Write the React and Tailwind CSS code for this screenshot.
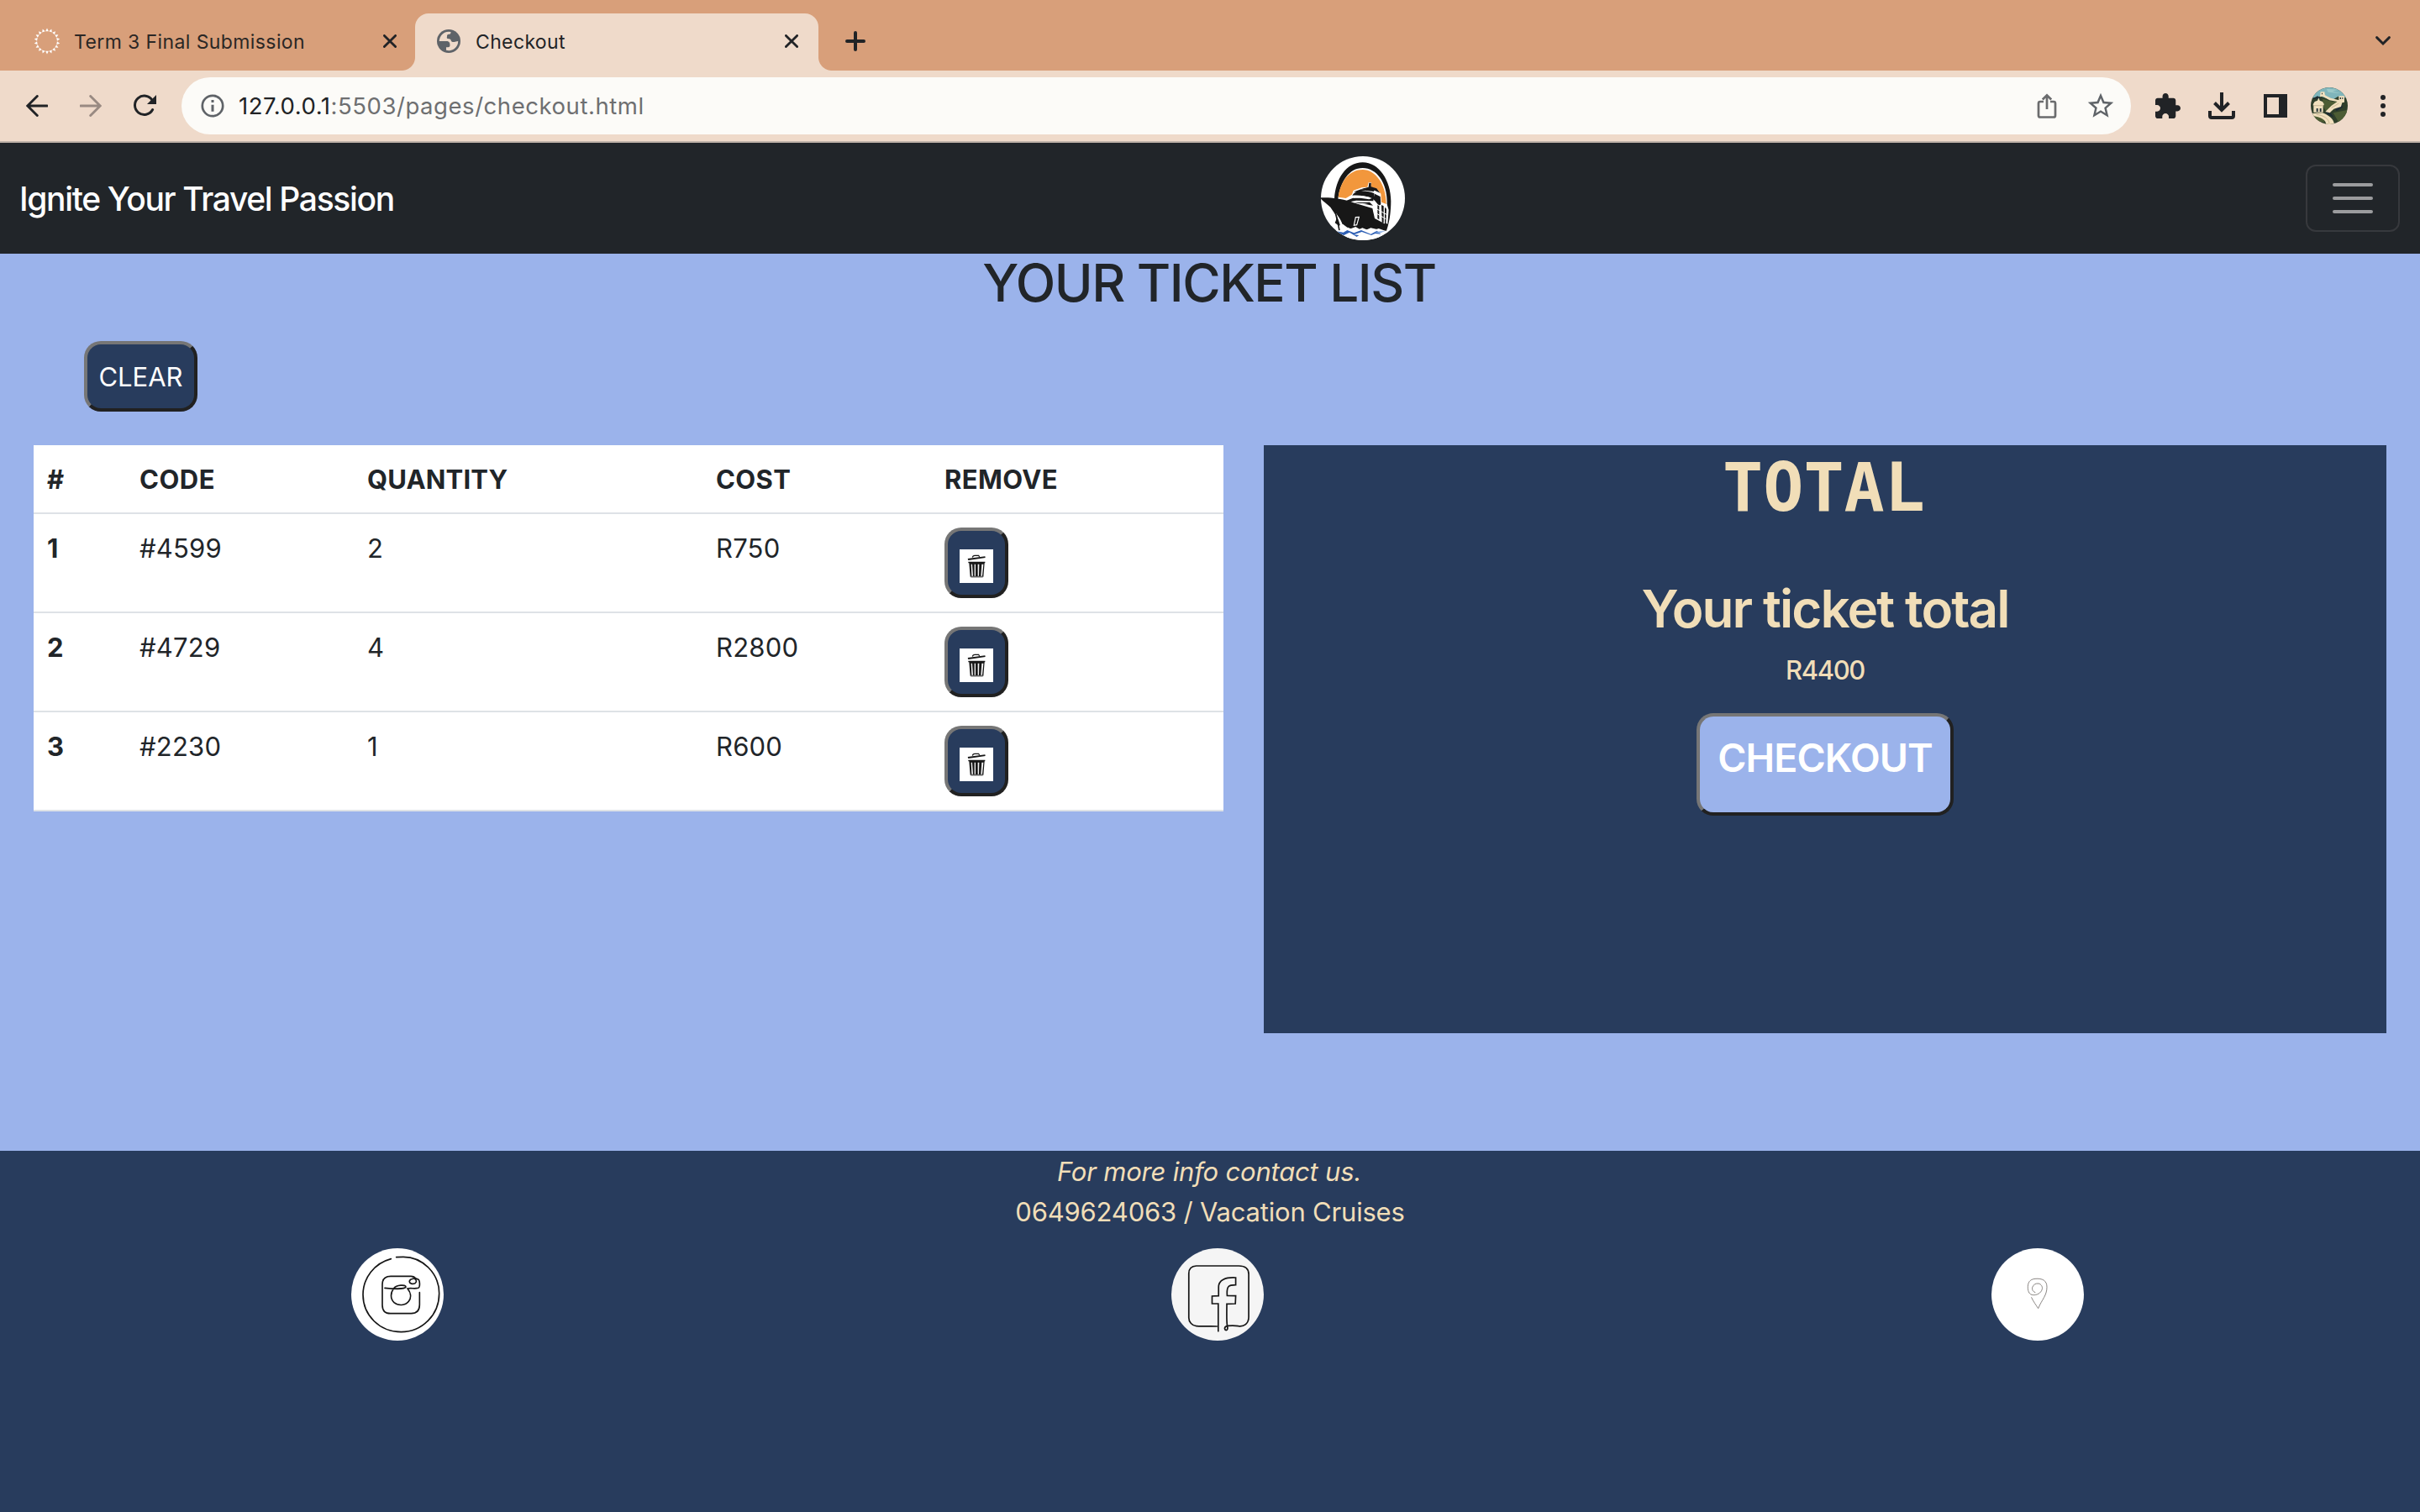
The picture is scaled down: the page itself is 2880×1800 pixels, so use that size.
const tickets = [
  { id: 1, code: "#4599", quantity: 2, cost: "R750" },
  { id: 2, code: "#4729", quantity: 4, cost: "R2800" },
  { id: 3, code: "#2230", quantity: 1, cost: "R600" },
];

const bevel =
  "border-4 border-t-[#767676] border-l-[#767676] border-r-[#212121] border-b-[#212121]";

function Spinner() {
  return (
    <svg className="h-8 w-8" viewBox="0 0 32 32" fill="#fff">
      {Array.from({ length: 18 }, (_, i) => (
        <path key={i} d="M16 .5l1.900 3.700h-3.800z" transform={`rotate(${i * 20} 16 16)`} />
      ))}
    </svg>
  );
}

function Cross() {
  return (
    <svg className="h-4 w-4 shrink-0" viewBox="0 0 16 16" stroke="#212326" strokeWidth="2.8" strokeLinecap="round">
      <path d="M1.4 1.4l13.2 13.2M14.6 1.4L1.4 14.6" />
    </svg>
  );
}

function Globe() {
  return (
    <svg className="h-7 w-7" viewBox="0 0 28 28">
      <circle cx="14" cy="14" r="14" fill="#5f6368" />
      <path
        fill="#efdaca"
        d="M2.800 14A11.200 11.200 0 0 1 16.500 3.100C16.600 5 15.800 5.600 14 5.700C12.400 5.800 12 6.600 12 8.200C12 9.300 11.400 9.700 12.200 10.700C13.200 11.400 16.200 10.600 16.600 12.700C17 14.900 18.500 15.200 20.500 15C22 14.900 23 14.300 25.200 14A11.200 11.200 0 0 1 11 24.800V21.200C12.500 21.300 15.200 21.400 15.400 19.500C15.600 17 15.200 14 11.500 14Z"
      />
    </svg>
  );
}

function TabStrip() {
  return (
    <div className="flex h-[84px] items-end bg-[#d89f7a]">
      <div className="flex h-[68px] w-[494px] items-center pb-[2px] pr-[22px] pl-10">
        <Spinner />
        <span className="ml-[16px] flex-1 pt-[1px] text-[23px] leading-8 tracking-[0.4px] text-[#2b2725]">
          Term 3 Final Submission
        </span>
        <Cross />
      </div>
      <div className="relative flex h-[68px] w-[480px] items-center rounded-t-[16px] bg-[#efdaca] pr-[24px] pb-[2px] pl-[26px]">
        <span className="absolute bottom-0 -left-4 h-4 w-4 bg-[radial-gradient(circle_at_0_0,transparent_15.5px,#efdaca_16.5px)]" />
        <span className="absolute -right-4 bottom-0 h-4 w-4 bg-[radial-gradient(circle_at_100%_0,transparent_15.5px,#efdaca_16.5px)]" />
        <Globe />
        <span className="ml-[18px] flex-1 pt-[1px] text-[23px] leading-8 tracking-[0.36px] text-[#212326]">Checkout</span>
        <Cross />
      </div>
      <div className="flex h-[68px] flex-1 items-center justify-between pr-[35px] pb-[2px] pl-8">
        <svg className="h-6 w-6" viewBox="0 0 24 24" stroke="#212326" strokeWidth="4" strokeLinecap="round">
          <path d="M12 2v20M2 12h20" />
        </svg>
        <svg className="h-3 w-[18px]" viewBox="0 0 18 12" fill="none" stroke="#212326" strokeWidth="2.9" strokeLinecap="round">
          <path d="M1.6 1.6L9 9l7.400-7.400" />
        </svg>
      </div>
    </div>
  );
}

function Avatar() {
  return (
    <svg className="h-11 w-11 rounded-full" viewBox="1110 311 132 132">
      <path fill="#2f3f2b" d="M1110 311h132v132h-132z" />
      <path fill="#7fb5bb" d="M1110 311h132v38l-34-6-22 14-40-14-36 6z" />
      <path fill="#9cc9c8" d="M1166 316l40 3-18 6 30 8-46-5z" />
      <path fill="#4c5c34" d="M1152 352l36 10 30-2-20 26-30 14-14-20zM1190 402l50-10v30l-30 14zM1112 408l34-2 14 30-24-4z" />
      <path fill="#1d2c33" d="M1196 384l24-16 4 14-22 14zM1162 396l20 8 10 14-24-10zM1116 352l18-10 14 8-20 2z" />
      <path fill="#f0dfbd" d="M1145 327h14l2 12 20 10 30 8-2 6-32-6-24-14-10 2zM1210 342h20v22l-8 2-4 14-26 8-14 14-16-4 22-22 26-18zM1118 372l6-10 10-4 4-10 4 10 10 4 6 10-4 4v24h-34v-24z" />
      <path fill="#f0dfbd" d="M1114 404l38-2c20 8 40 20 42 41h-30c2-16-18-26-50-31z" />
      <path fill="#26363a" d="M1130 386h6v12h-6zM1142 386h6v12h-6zM1149 331h3v5h-3zM1214 347h4v6h-4zM1222 347h3v6h-3z" />
      <path fill="none" stroke="#b7a583" strokeWidth="2" d="M1118 376h38M1130 408c26 3 44 14 46 32M1184 384l26-16" />
    </svg>
  );
}

function Toolbar() {
  return (
    <div className="flex h-[86px] items-center border-b-2 border-[#bfb2a8] bg-[#efdaca] pl-[31px]">
      <svg className="mb-[1px] h-[26px] w-[26px]" viewBox="0 0 26 26" fill="none" stroke="#212326" strokeWidth="2.9" strokeLinecap="round">
        <path d="M25 13H2M13.300 1.500L1.800 13l11.500 11.500" />
      </svg>
      <svg className="mb-[1px] ml-[38px] h-[26px] w-[26px]" viewBox="0 0 26 26" fill="none" stroke="#998a82" strokeWidth="2.9" strokeLinecap="round">
        <path d="M1 13h23M12.700 1.500L24.200 13 12.700 24.500" />
      </svg>
      <svg className="ml-[38px] h-[28px] w-[28px]" viewBox="0 0 28 28" fill="none" stroke="#212326" strokeWidth="3">
        <path d="M22.600 18.500A11.200 11.200 0 1 1 22.300 7.500" strokeLinecap="round" />
        <path d="M27 1v11H16z" fill="#212326" stroke="none" />
      </svg>

      <div className="ml-[29px] flex h-[68px] w-[2320px] items-center rounded-full bg-[#fcfbf8] pl-[23px]">
        <svg className="h-7 w-7" viewBox="0 0 28 28" fill="none" stroke="#5f6368" strokeWidth="2.7">
          <circle cx="14" cy="14" r="12.200" />
          <path d="M14 12.700v8M14 7v3" strokeWidth="3" />
        </svg>
        <span className="ml-[17px] flex-1 text-[27.5px] leading-10 tracking-[0.55px] text-[#6e6f71]">
          <span className="text-[#212326]">127.0.0.1</span>:5503/pages/checkout.html
        </span>
        <svg className="mr-[1px] h-[30px] w-6" viewBox="0 0 24 30" fill="none" stroke="#6b6c6e" strokeWidth="2.700">
          <path d="M8 10H4a2 2 0 0 0-2 2v14.500a2 2 0 0 0 2 2h16a2 2 0 0 0 2-2V12a2 2 0 0 0-2-2h-4" />
          <path d="M12 19V2.500M6.800 7.500L12 2.300l5.200 5.200" />
        </svg>
        <svg className="mr-[20px] ml-[35px] h-[32px] w-[32px]" viewBox="1.500 1.500 21 21" fill="#5f6368">
          <path d="M22 9.240l-7.190-.62L12 2 9.190 8.630 2 9.240l5.460 4.730L5.820 21 12 17.270 18.180 21l-1.630-7.030L22 9.240zM12 15.400l-3.760 2.270 1-4.280-3.320-2.880 4.380-.38L12 6.100l1.710 4.040 4.380.38-3.320 2.880 1 4.280L12 15.400z" />
        </svg>
      </div>

      <svg className="ml-[29px] h-[30px] w-[30px]" viewBox="2 1 21 21" fill="#212326">
        <path d="M20.500 11H19V7c0-1.100-.9-2-2-2h-4V3.500C13 2.120 11.880 1 10.500 1S8 2.120 8 3.500V5H4c-1.100 0-1.990.9-1.990 2v3.800H3.500c1.490 0 2.700 1.210 2.700 2.700s-1.210 2.700-2.700 2.700H2V20c0 1.100.9 2 2 2h3.800v-1.500c0-1.490 1.210-2.700 2.700-2.700s2.700 1.210 2.700 2.700V22H17c1.100 0 2-.9 2-2v-4h1.500c1.380 0 2.500-1.120 2.500-2.500S21.880 11 20.500 11z" />
      </svg>
      <svg className="ml-[33px] h-8 w-8" viewBox="0 0 32 32" fill="none" stroke="#212326" strokeWidth="4">
        <path d="M16 0v21M7.500 12.500L16 21l8.500-8.500" />
        <path d="M2 22v6a2 2 0 0 0 2 2h24a2 2 0 0 0 2-2v-6" />
      </svg>
      <svg className="ml-[34px] h-7 w-7" viewBox="0 0 28 28">
        <path fill="#212326" fillRule="evenodd" d="M0 0h28v28H0zM4 4v20h14V4z" />
      </svg>
      <span className="ml-[28px]">
        <Avatar />
      </span>
      <svg className="ml-[39px] h-[26px] w-[6px]" viewBox="0 0 6 26" fill="#212326">
        <circle cx="3" cy="3" r="3" />
        <circle cx="3" cy="13" r="3" />
        <circle cx="3" cy="23" r="3" />
      </svg>
    </div>
  );
}

function ShipLogo() {
  return (
    <svg className="h-[100px] w-[100px] rounded-full" viewBox="96 48 300 300">
      <path fill="#fff" d="M96 48h300v300H96z" />
      <path
        fill="#171717"
        d="M144 200c4-70 42-130 101-130s101 66 101 138c0 42-6 78-16 106h-12c10-34 14-64 14-104 0-66-36-120-87-120-48 0-80 48-88 112z"
      />
      <path fill="#f2973c" d="M158 194c8-58 40-98 87-98 48 0 84 56 84 120v14l-26-24-4-22-90 0-24 14z" />
      <path fill="#fff" d="M182 206l22-14 8-22 30-10 20-2 4-16h10l-2 16 22 6 14 18 2 30 20 8 6 20-4 50-40-20-70-40z" />
      <path fill="#171717" d="M122 196c26 2 60 6 90 18l68 20 8 36 38 20-2 28-24-8-26-6-28 12-26-16-22 8-24-18-14 6-14-10 8-20-24-36c-14-12-28-22-38-34z" />
      <path fill="#171717" d="M208 188c10-18 40-22 78-8l4 28-16-12c-20-6-42-10-66-8zM266 158l2-15h7v14l20 6 12 16-26-12-40-2zM216 174l34-12 38 6-4 6-30-4-38 6zM188 206l26-10h66l4 12-62-2-30 6zM214 214l56-2 12 12z" />
      <path fill="#fff" d="M216 192c20-4 44-2 62 6l-10 4c-18-4-40-6-58-4zM222 216c18-1 34 0 46 4-16 1-32 0-46-4z" />
      <path fill="#171717" d="M288 182l20 10 2 28-6 4v50l-6-4v-52l-10-12zM312 222l8 4v60l-6-2zM324 230l6 6-2 54-4-2z" />
      <path stroke="#fff" strokeWidth="3" fill="none" d="M284 230l46 26M284 246l44 26M284 214l24 12" />
      <path fill="#fff" d="M146 244c10 20 26 30 34 72l-12-4c-4-26-12-44-22-68z" />
      <path fill="none" stroke="#171717" strokeWidth="5" d="M146 242c6 26 12 48 16 72" />
      <path fill="none" stroke="#fff" strokeWidth="3.500" d="M220 266l12-1-8 28-10 2z" />
      <path fill="#fff" d="M136 314l34-2 22-10 28 12 24-10 30 12 28-10 34 12v30H150z" />
      <path fill="#2d5fb5" d="M150 316l26 4 14-8 24 10 26-10 34 14 22-12 14 12-20-2-14 6-34-12-28 10 18 2-8 6-26-16-20 10-20-6z" />
      <path fill="#7fa6e0" d="M286 318l40-3-22 8z" />
    </svg>
  );
}

function Navbar() {
  return (
    <nav className="flex h-[132px] items-center justify-between bg-[#212529] pr-6 pl-[23px]">
      <span className="w-[600px] pt-[1px] text-[39px] leading-[60px] font-[450] tracking-[-1.35px] text-white">
        Ignite Your Travel Passion
      </span>
      <span className="ml-[949px]">
        <ShipLogo />
      </span>
      <button className="ml-auto flex h-20 w-28 flex-col items-center justify-center gap-3 rounded-[12px] border-2 border-[#37393d]">
        <span className="h-1 w-12 rounded-full bg-[#9b9c9e]" />
        <span className="h-1 w-12 rounded-full bg-[#9b9c9e]" />
        <span className="h-1 w-12 rounded-full bg-[#9b9c9e]" />
      </button>
    </nav>
  );
}

function TrashPicture() {
  return (
    <svg className="h-10 w-10" viewBox="96 402 120 120">
      <path fill="#fff" d="M96 402h120v120H96z" />
      <path fill="none" stroke="#171717" strokeWidth="3.500" d="M142 431c1-6 3-7 8-7h14l3 5" />
      <path fill="#171717" d="M125 435l62-8 1 5-61 9zM127 446h60v5h-60zM130 451h55l-4 49h-47z" />
      <path fill="#f3f3f3" d="M137 455h4l3 42h-5zM149 455h4v42h-4zM161 455h5l-1 42h-4zM175 455h6l-4 42h-5z" />
      <path fill="#8d8d8d" d="M136 500h43v3h-43z" />
    </svg>
  );
}

const columns = "grid grid-cols-[110px_270px_416px_272px_348px] border-b-2 border-[#dee2e6]";
const cell = "h-20 px-4 pt-[17px]";

function TicketTable() {
  return (
    <div className="w-[1416px] self-start bg-white text-[31px] leading-[48px] text-[#212529]">
      <div className={`${columns} font-bold`}>
        <span className={cell}>#</span>
        <span className={`${cell} tracking-[0.5px]`}>CODE</span>
        <span className={`${cell} pl-[17px] tracking-[0.17px]`}>QUANTITY</span>
        <span className={`${cell} tracking-[0.4px]`}>COST</span>
        <span className={`${cell} tracking-[0.4px]`}>REMOVE</span>
      </div>
      {tickets.map((t) => (
        <div key={t.id} className={columns}>
          <span className={`${cell} font-bold`}>{t.id}</span>
          <span className={`${cell} tracking-[0.2px]`}>{t.code}</span>
          <span className={`${cell} pl-[17px]`}>{t.quantity}</span>
          <span className={`${cell} tracking-[0.2px]`}>{t.cost}</span>
          <span className="p-4">
            <button className={`flex h-[84px] w-[76px] justify-center rounded-[20px] bg-[#283c5d] pt-[22px] ${bevel}`}>
              <TrashPicture />
            </button>
          </span>
        </div>
      ))}
    </div>
  );
}

function TotalPanel() {
  return (
    <section className="flex h-[700px] w-[1336px] flex-col items-center bg-[#283c5d] text-[#f1deb8]">
      <h2 className="h-[96px] pr-[3px] font-['DejaVu_Sans_Mono',monospace] text-[80px] leading-[102px] font-bold">TOTAL</h2>
      <h3 className="mt-[60px] text-[62px] leading-[78px] font-[580] tracking-[-1.9px]">Your ticket total</h3>
      <p className="mt-[10px] text-[31px] leading-[48px] font-medium tracking-[-1.4px]">R4400</p>
      <button
        className={`mt-[27px] flex h-[122px] w-[306px] justify-center rounded-[20px] bg-[#9bb3eb] pt-[20px] text-[46.5px] leading-[58px] font-[580] tracking-[-0.9px] text-white ${bevel}`}
      >
        CHECKOUT
      </button>
    </section>
  );
}

function InstagramDrawing() {
  return (
    <svg className="h-[110px] w-[110px] rounded-full bg-white" viewBox="54 48 330 330" fill="none" stroke="#161616" strokeWidth="5" strokeLinecap="round">
      <path d="M196 86C136 102 96 154 96 214c0 74 60 133 136 133 76 0 136-62 136-138 0-72-60-130-128-130-8 0-16 0-25 1" />
      <path d="M298 206v44c0 20-10 31-30 31h-74c-20 0-29-12-29-30v-74c0-18 10-29 30-29h72c8 0 14 3 18 9" />
      <path d="M174 190c28 3 73 5 75-4 0-9-34-7-42 4-14 18-14 38 0 52 14 12 40 12 52-4 12-16 6-34-4-46 12-3 26 2 38-2 8-3 6-28 0-31-8-4-28-4-31 6-2 10 12 12 20 8 8-6 4-16-7-17" />
    </svg>
  );
}

function FacebookDrawing() {
  return (
    <svg className="h-[110px] w-[110px] rounded-full bg-[#f5f5f5]" viewBox="671 407 270 330" preserveAspectRatio="none" fill="none" stroke="#161616" strokeWidth="1.700" strokeLinecap="round">
      <path
        vectorEffect="non-scaling-stroke"
        d="M804 686c-18-2-40 1-60-1-12-1-22-14-22-30V497c0-16 8-26 22-27h124c18 0 29 10 29 30v152c0 24-14 36-30 33-12-3-22-2-32-1-10 2-10 14-4 16 5 0 5-8 3-18-2-20-1-46-1-76l25-1 1-28-25-1c-2-34 4-38 25-38v-26c-30-2-50 8-50 34v31l-19 1v27h18v98"
      />
    </svg>
  );
}

function PinDrawing() {
  return (
    <svg className="h-[110px] w-[110px] rounded-full bg-white" viewBox="60 48 330 330" fill="none" stroke="#77736f" strokeWidth="2.600" strokeLinecap="round">
      <path d="M216 206c-8-3-12-10-10-18 3-10 12-15 22-14 10 2 15 12 13 20-4 15-20 22-32 21-14-1-18-12-19-24-1-20 6-32 26-34 26-2 42 6 42 30 0 30-18 44-31 76-8-12-17-24-24-39" />
    </svg>
  );
}

function Footer() {
  return (
    <footer className="flex h-[430px] flex-col items-center bg-[#283c5d] pt-[1px] text-[31px] leading-[48px] text-[#f1deb8]">
      <p className="pr-[2px] font-[430] italic tracking-[-0.2px]">For more info contact us.</p>
      <p className="font-[430] tracking-[-0.2px]">0649624063 / Vacation Cruises</p>
      <div className="mt-[19px] flex w-full justify-between pr-[400px] pl-[418px]">
        <InstagramDrawing />
        <FacebookDrawing />
        <PinDrawing />
      </div>
    </footer>
  );
}

export default function App() {
  return (
    <div className="flex h-[1800px] w-[2880px] flex-col overflow-hidden bg-[#9bb3eb] font-['Inter',sans-serif]">
      <TabStrip />
      <Toolbar />
      <Navbar />
      <main className="h-[1068px]">
        <h1 className="h-[77px] pr-[2px] text-center text-[62px] leading-[70px] font-[540] tracking-[-1.5px] text-[#212529]">
          YOUR TICKET LIST
        </h1>
        <button
          className={`mt-[27px] ml-[100px] flex h-[84px] w-[135px] items-center justify-center rounded-[20px] bg-[#283c5d] pt-[1px] text-[31px] leading-[48px] text-white ${bevel}`}
        >
          CLEAR
        </button>
        <div className="mt-10 flex justify-between px-10">
          <TicketTable />
          <TotalPanel />
        </div>
      </main>
      <Footer />
    </div>
  );
}
